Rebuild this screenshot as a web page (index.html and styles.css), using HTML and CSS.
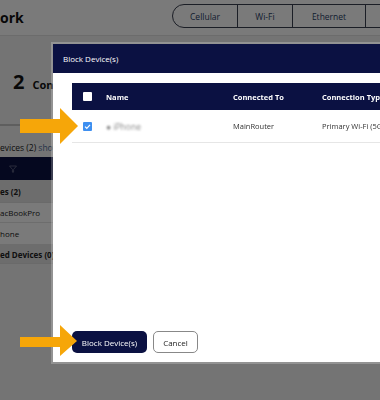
FILE: index.html
```html
<!DOCTYPE html>
<html lang="en">
<head>
  <meta charset="UTF-8">
  <meta name="viewport" content="width=device-width, initial-scale=1.0">
  <title>Network - Block Device(s)</title>
  <link rel="stylesheet" href="styles.css">
</head>
<body>
  <div class="page">
    <div class="page-header">
      <h1>ork</h1>
      <div class="tabs">
        <div class="tab">Cellular</div>
        <div class="tab">Wi-Fi</div>
        <div class="tab">Ethernet</div>
        <div class="tab"></div>
      </div>
    </div>

    <div class="summary">
      <span class="big-num">2</span>
      <span class="summary-label">Connected</span>
    </div>
    <div class="progress"></div>

    <div class="devices-title">evices (2) <span class="link">show</span></div>
    <div class="filter-bar">
      <svg width="8" height="8" viewBox="0 0 8 8"><path d="M0.5 1 L7.5 1 L4.6 4.4 L4.6 7.2 L3.4 7.2 L3.4 4.4 Z" fill="none" stroke="#6a6f8a" stroke-width="0.8"/></svg>
    </div>
    <div class="section-row">es (2)</div>
    <div class="device-row">acBookPro</div>
    <div class="device-row tall">hone</div>
    <div class="section-row short">ed Devices (0)</div>
  </div>

  <div class="overlay"></div>

  <div class="modal">
    <div class="modal-header">Block Device(s)</div>
    <div class="modal-body">
      <table class="device-table">
        <thead>
          <tr>
            <th class="col-check"><span class="checkbox"></span></th>
            <th class="col-name">Name</th>
            <th class="col-router">Connected To</th>
            <th>Connection Type</th>
          </tr>
        </thead>
        <tbody>
          <tr>
            <td class="col-check">
              <span class="checkbox checked">
                <svg width="9" height="9" viewBox="0 0 9 9"><path d="M2 4.6 L3.8 6.3 L7 2.8" fill="none" stroke="#fff" stroke-width="1.2"/></svg>
              </span>
            </td>
            <td class="col-name"><span class="blurred">&#9679; iPhone</span></td>
            <td class="col-router">MainRouter</td>
            <td>Primary Wi-Fi (5GHz)</td>
          </tr>
        </tbody>
      </table>
    </div>
    <div class="modal-footer">
      <button class="btn btn-primary">Block Device(s)</button>
      <button class="btn btn-secondary">Cancel</button>
    </div>
  </div>

  <svg class="arrow arrow-row" width="60" height="38" viewBox="0 0 60 38">
    <path d="M0 11 L40 11 L40 0 L58 18 L40 36 L40 25 L0 25 Z" fill="#f6a609"/>
  </svg>
  <svg class="arrow arrow-button" width="60" height="32" viewBox="0 0 60 32">
    <path d="M0 12 L40 12 L40 0 L57 16 L40 31 L40 22 L0 22 Z" fill="#f6a609"/>
  </svg>
</body>
</html>
```

FILE: styles.css
```css
body { margin: 0; width: 380px; height: 400px; overflow: hidden; font-family: "Open Sans", "Noto Sans", sans-serif; background: #f2f2f2; position: relative; }
.page { width: 380px; }
.page-header { height: 36px; background: #fff; border-bottom: 1px solid #e2e2e2; display: flex; align-items: flex-start; box-sizing: border-box; }
.page-header h1 { margin: 8px 0 0 0; font-size: 14px; font-weight: 700; color: #111; width: 172px; flex-shrink: 0; }
.tabs { display: flex; flex-shrink: 0; margin-top: 4px; height: 24px; border: 1px solid #3a3f50; border-radius: 12px 0 0 12px; box-sizing: border-box; }
.tab { font-size: 8.5px; color: #2a3d66; display: flex; align-items: center; justify-content: center; border-right: 1px solid #3a3f50; flex-shrink: 0; }
.tab:nth-child(1) { width: 64px; }
.tab:nth-child(2) { width: 54px; }
.tab:nth-child(3) { width: 72px; }
.tab:nth-child(4) { width: 40px; }
.summary { display: flex; align-items: baseline; padding: 36px 0 0 13px; height: 54px; box-sizing: border-box; }
.big-num { font-size: 20px; font-weight: 700; color: #111; line-height: 1; }
.summary-label { font-size: 11px; font-weight: 700; color: #111; margin-left: 8px; }
.progress { margin: 34px 0 0 0; width: 60px; height: 2px; background: #c4c4c4; }
.devices-title { font-size: 8.5px; line-height: 12px; color: #222; padding: 16px 0 0 0; height: 31px; box-sizing: border-box; }
.devices-title .link { color: #4f6d99; }
.filter-bar { height: 23px; background: #0b1142; display: flex; align-items: center; padding-left: 9px; }
.section-row { height: 23px; background: #e4e4e4; font-size: 8px; font-weight: 700; color: #222; display: flex; align-items: center; box-sizing: border-box; border-bottom: 1px solid #ddd; }
.section-row.short { height: 19px; }
.device-row { height: 20px; background: #fff; font-size: 8px; color: #222; display: flex; align-items: center; box-sizing: border-box; border-bottom: 1px solid #e4e4e4; }
.device-row.tall { height: 22px; }
.overlay { position: fixed; left: 0; top: 0; width: 380px; height: 400px; background: rgba(0, 0, 0, 0.52); }
.modal { position: fixed; left: 53px; top: 44px; width: 420px; height: 318px; background: #fff; display: flex; flex-direction: column; box-shadow: 0 0 0 2px rgba(255, 255, 255, 0.22); }
.modal-header { height: 29px; background: #0b1142; color: #fff; font-size: 8px; display: flex; align-items: center; padding-left: 10px; flex-shrink: 0; }
.modal-body { flex: 1; padding: 10px 0 0 19px; }
.device-table { border-collapse: collapse; width: 400px; font-size: 7.5px; }
.device-table th { background: #0b1142; color: #fff; font-weight: 700; text-align: left; height: 27px; padding: 0; }
.device-table td { height: 32px; padding: 0; color: #333; border-bottom: 1px solid #e6e6e6; }
.col-check { width: 34px; }
.col-name { width: 127px; }
.col-router { width: 89px; }
.checkbox { display: block; width: 9px; height: 9px; margin-left: 11px; background: #fff; border-radius: 1px; }
.checkbox.checked { background: #3e8ff0; }
.checkbox svg { display: block; }
.blurred { font-size: 8.5px; color: #8a8a8a; filter: blur(1.2px); }
.modal-footer { display: flex; gap: 6px; padding: 0 0 9px 19px; }
.btn { font-family: "Open Sans", "Noto Sans", sans-serif; font-size: 8px; height: 22px; border-radius: 5px; padding: 0; cursor: pointer; }
.btn-primary { width: 75px; background: #0b1142; color: #fff; border: none; }
.btn-secondary { width: 45px; background: #fff; color: #222; border: 1px solid #888; }
.arrow { position: fixed; display: block; }
.arrow-row { left: 20px; top: 108px; }
.arrow-button { left: 20px; top: 325px; }
```
